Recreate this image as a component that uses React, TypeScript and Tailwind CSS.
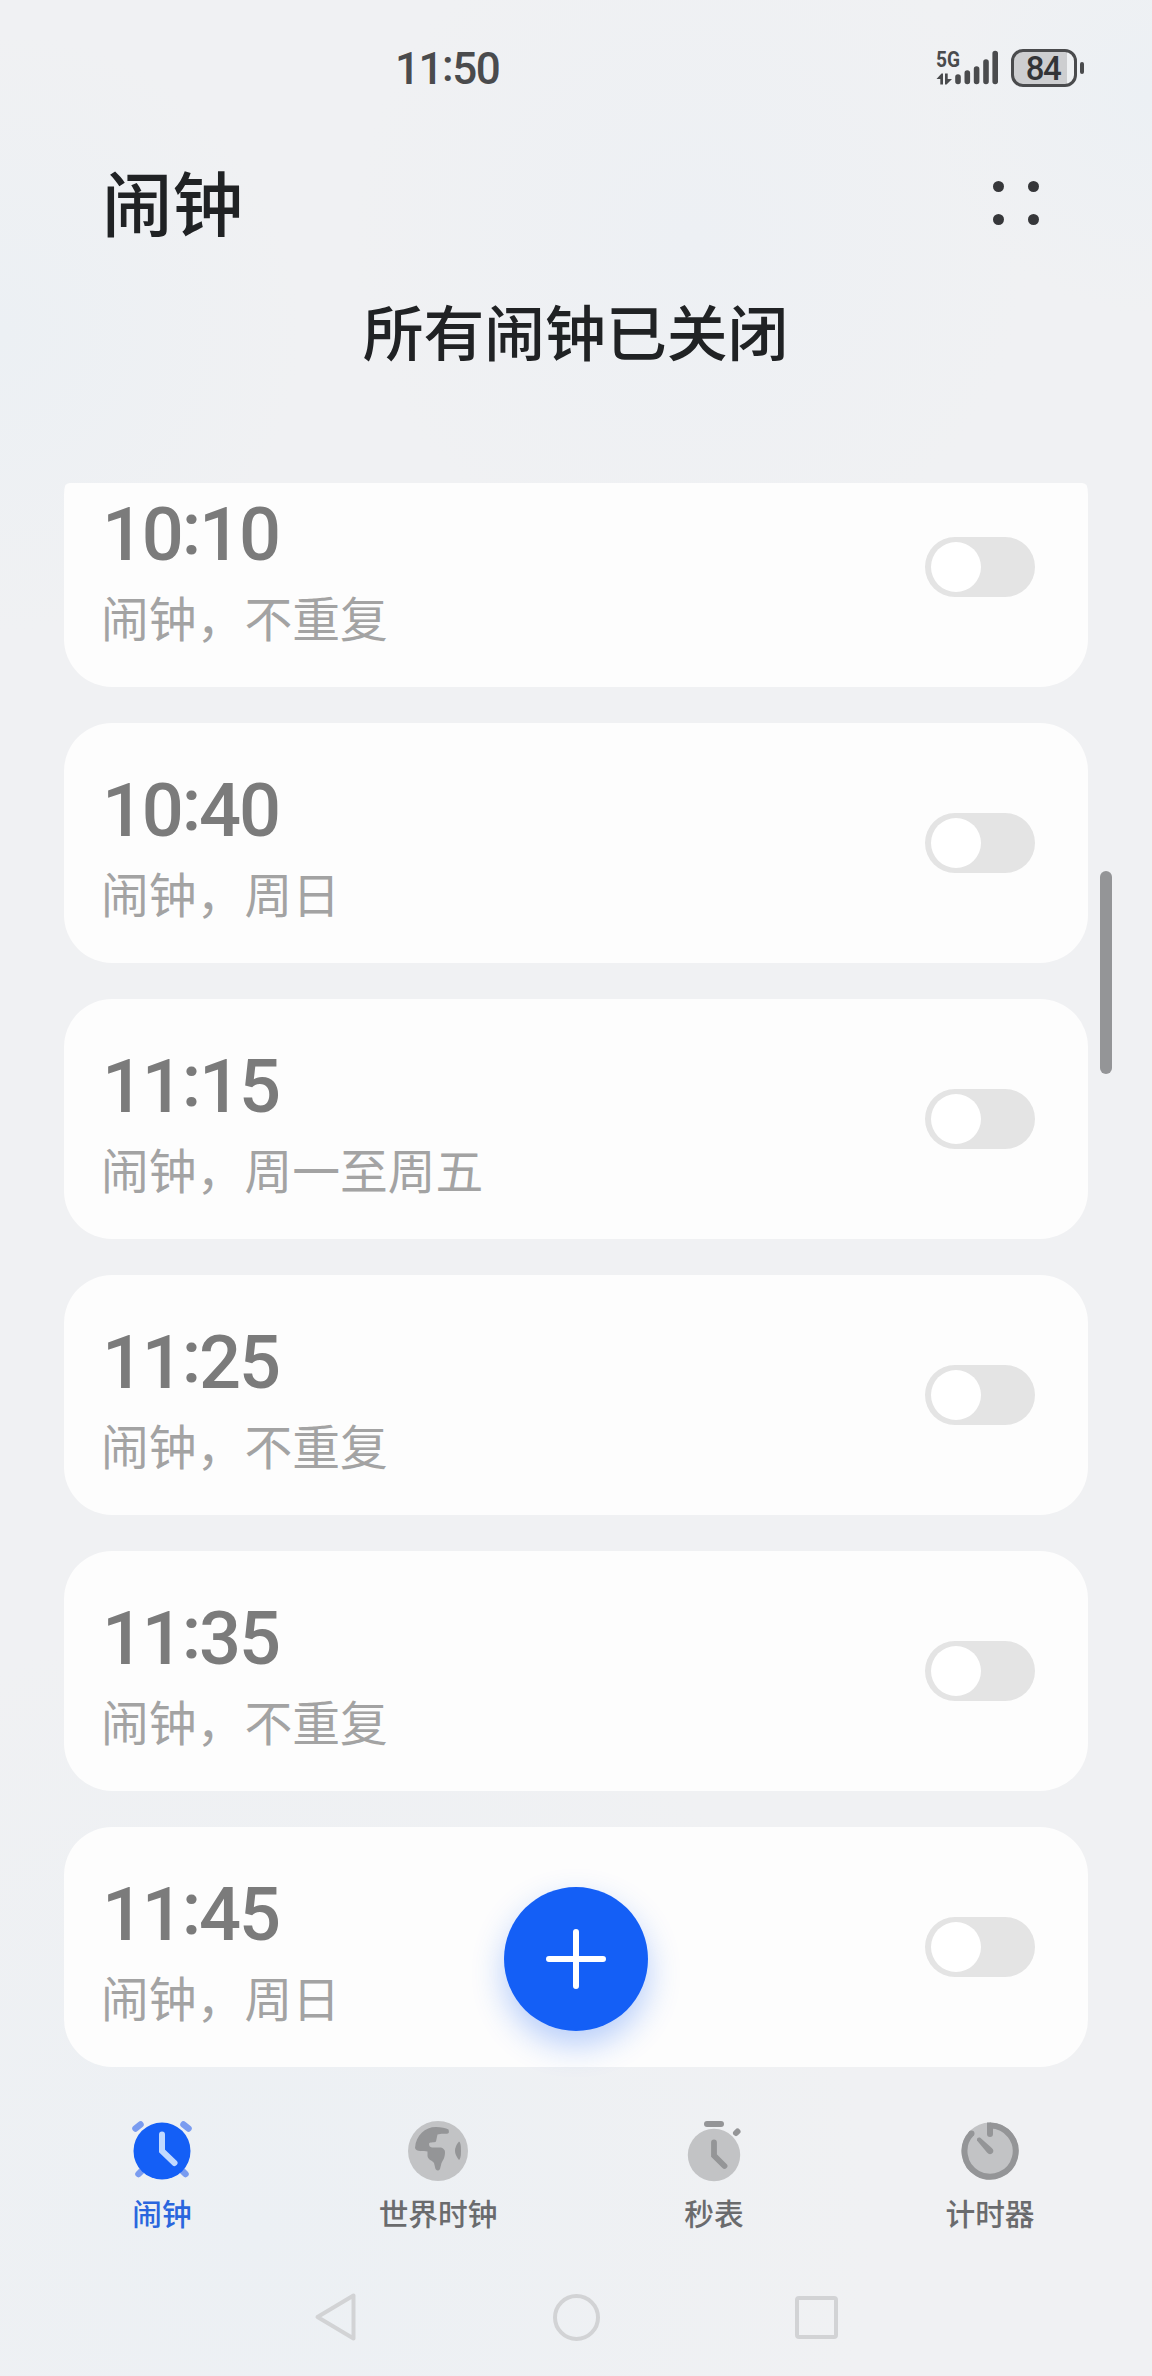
import React from 'react';

const alarms = [
  { hour: '10', minute: '10', note: '闹钟，不重复' },
  { hour: '10', minute: '40', note: '闹钟，周日' },
  { hour: '11', minute: '15', note: '闹钟，周一至周五' },
  { hour: '11', minute: '25', note: '闹钟，不重复' },
  { hour: '11', minute: '35', note: '闹钟，不重复' },
  { hour: '11', minute: '45', note: '闹钟，周日' },
];

function StatusBar() {
  return (
    <div className="flex h-[136px] shrink-0 items-center justify-between pr-[68px] pl-[395px] font-[Roboto,sans-serif] text-[#4a4b4d]">
      <span className="pt-[2px] text-[44px] leading-none font-medium tracking-[-1.5px]">
        11<span className="relative top-[-3px]">:</span>50
      </span>
      <div className="flex items-center gap-[11px]">
        <svg width="64" height="36" viewBox="0 0 64 36" className="overflow-visible">
          <text x="0" y="17" fontSize="22.500" fontWeight="700" textLength="24" lengthAdjust="spacingAndGlyphs" fill="#4a4b4d">5G</text>
          <path d="M4.300 34.500V29H0.500L5.500 23.500H7V34.500ZM9 23.500H11.700V29H16L10.500 34.500H9Z" fill="#4a4b4d" />
          <g stroke="#4a4b4d" strokeWidth="5.600" strokeLinecap="round">
            <path d="M22 27V31.500M31.300 23V31.500M40.600 19V31.500M50 12V31.500M59.200 3.500V31.500" />
          </g>
        </svg>
        <div className="flex items-center gap-[3px]">
          <div className="flex h-[38px] w-[66px] items-center justify-center rounded-[12px] border-[3px] border-[#4a4b4d] bg-linear-to-r from-[#cdced0] from-88% to-[#eef0f2] to-88%">
            <span className="mr-[2px] text-[33px] leading-none font-medium tracking-[-1.5px] text-[#333436]">84</span>
          </div>
          <div className="h-[12px] w-[4px] rounded-full bg-[#4a4b4d]" />
        </div>
      </div>
    </div>
  );
}

function AlarmCard({ hour, minute, note }: { hour: string; minute: string; note: string }) {
  return (
    <div className="flex h-[240px] shrink-0 items-center justify-between rounded-[48px] bg-[#fdfdfd] pr-[53px] pl-[38px]">
      <div className="flex flex-col pt-[18px]">
        <span className="font-[Roboto,sans-serif] text-[74px] leading-[84px] font-medium tracking-[-2.2px] text-[#7b7b7b]">
          {hour}
          <span className="relative top-[-6px]">:</span>
          {minute}
        </span>
        <span className="-mt-[2px] ml-[-1px] text-[47.8px] leading-[84px] text-[#a3a3a3]">{note}</span>
      </div>
      <div className="h-[60px] w-[110px] rounded-full bg-[#e4e4e4] px-[6px] py-[5px]">
        <div className="size-[50px] rounded-full bg-white" />
      </div>
    </div>
  );
}

const AlarmIcon = () => (
  <svg width="64" height="64" viewBox="0 0 64 64">
    <g stroke="#7a9cf0" strokeWidth="6.500" strokeLinecap="round">
      <path d="M5.500 9.500L10.500 5.500M53.500 5.500L58.500 9.500M8.500 55L13 50.500M55.500 55L51 50.500" />
    </g>
    <circle cx="32" cy="32" r="28.500" fill="#145ff6" />
    <path d="M32 15.500V32L44.500 44" fill="none" stroke="#c1d9ff" strokeWidth="6" strokeLinecap="round" />
  </svg>
);

const GlobeIcon = () => (
  <svg width="64" height="64" viewBox="0 0 64 64">
    <circle cx="32" cy="32" r="30" fill="#c2c3c5" />
    <path d="M9 29C10 16 19 8 30 8C35 8 40 9 42.500 10.500Q43.500 14 42 14.500C39 15 35 14 31.500 15.500L30 22.500C28 24 23 22.500 23 25Q23 28 26 28.500H35Q39 30 39 33C39 39 37 41 35.500 44L34 50Q32 53 29.500 50L28 44C26 41 22 41 21.500 37V32.500C18 32 10 33 9 29Z" fill="#949597" />
    <path d="M53 22.500Q55 23 55 32Q55 40 53 41Q49 36 49 32Q49 27 53 22.500Z" fill="#949597" />
  </svg>
);

const StopwatchIcon = () => (
  <svg width="64" height="64" viewBox="0 0 64 64">
    <circle cx="32" cy="36" r="26.200" fill="#c2c3c5" />
    <path d="M25 5H39" stroke="#949597" strokeWidth="6" strokeLinecap="round" />
    <path d="M54 14L55.500 12.500" stroke="#949597" strokeWidth="6" strokeLinecap="round" />
    <path d="M32 23.500V36.500L42.500 47" fill="none" stroke="#949597" strokeWidth="5.800" strokeLinecap="round" />
  </svg>
);

const TimerIcon = () => (
  <svg width="64" height="64" viewBox="0 0 64 64">
    <circle cx="32" cy="32" r="28.500" fill="#c2c3c5" />
    <path d="M32 6.500A25.600 25.600 0 1 1 13.500 14.500" fill="none" stroke="#949597" strokeWidth="6" />
    <circle cx="13.500" cy="14.500" r="3" fill="#949597" />
    <path d="M29 3.500H32.500L35 8V15A3 3 0 0 1 29 15Z" fill="#949597" />
    <path d="M19 21.500Q18.500 18 22 18.500L33.500 28.800Q37 32 34 34.500Q31.500 36.500 29 33.500Z" fill="#949597" />
  </svg>
);

const tabs = [
  { label: '闹钟', icon: <AlarmIcon />, active: true },
  { label: '世界时钟', icon: <GlobeIcon /> },
  { label: '秒表', icon: <StopwatchIcon /> },
  { label: '计时器', icon: <TimerIcon /> },
];

export default function App() {
  return (
    <div className="relative flex h-[2376px] w-[1152px] flex-col overflow-hidden bg-[#f0f1f3] bg-[radial-gradient(circle_at_0%_14%,#ecf0f4_0,transparent_300px),radial-gradient(circle_at_60%_10%,#edf0f4_0,transparent_340px),radial-gradient(circle_at_100%_4%,#ecf0f4_0,transparent_220px),radial-gradient(circle_at_22%_94%,#ecf0f4_0,transparent_620px)] font-['Noto_Sans_CJK_SC',sans-serif]">
      <StatusBar />

      <header className="flex h-[134px] shrink-0 items-center justify-between pr-[113px] pl-[102px]">
        <h1 className="-mt-[5px] text-[70.5px] leading-none font-medium text-[#202224]">闹钟</h1>
        <div className="grid grid-cols-2 gap-x-[24px] gap-y-[22px]">
          {[0, 1, 2, 3].map((i) => (
            <span key={i} className="size-[11px] rounded-full bg-[#36373a]" />
          ))}
        </div>
      </header>

      <h2 className="flex h-[213px] shrink-0 justify-center pt-[29px] pr-px text-[60.8px] leading-[61px] font-medium text-[#202224]">所有闹钟已关闭</h2>

      <main className="mx-[64px] flex h-[1596px] shrink-0 flex-col justify-end gap-[36px] overflow-hidden rounded-t-[6px] pb-[12px]">
        {alarms.map((a) => (
          <AlarmCard key={a.hour + a.minute} {...a} />
        ))}
      </main>

      <nav className="flex h-[188px] shrink-0 px-[24px] pt-[40px]">
        {tabs.map((t) => (
          <div key={t.label} className="flex flex-1 flex-col items-center gap-[7px]">
            {t.icon}
            <span className={t.active ? 'text-[29.7px] leading-[46px] font-medium text-[#2a66de]' : 'text-[29.7px] leading-[46px] font-medium text-[#6a6b6d]'}>{t.label}</span>
          </div>
        ))}
      </nav>

      <div className="flex h-[100px] items-center justify-center gap-[195px]">
        <svg width="44" height="50" viewBox="0 0 44 50">
          <path d="M3.500 25L39.500 3.500V46.500Z" fill="none" stroke="#d2d3d5" strokeWidth="4" strokeLinejoin="round" />
        </svg>
        <div className="size-[47px] rounded-full border-4 border-[#d2d3d5]" />
        <div className="size-[43px] rounded-[4px] border-4 border-[#d2d3d5]" />
      </div>

      <div className="absolute top-[871px] right-[40px] h-[203px] w-[12px] rounded-full bg-[#949597]" />

      <button className="absolute top-[1887px] left-[504px] flex size-[144px] items-center justify-center rounded-full bg-[#145ff6] shadow-[0_14px_32px_rgba(20,95,246,0.3)]">
        <svg width="60" height="60" viewBox="0 0 60 60">
          <path d="M30 3V57M3 30H57" stroke="white" strokeWidth="6" strokeLinecap="round" />
        </svg>
      </button>
    </div>
  );
}
